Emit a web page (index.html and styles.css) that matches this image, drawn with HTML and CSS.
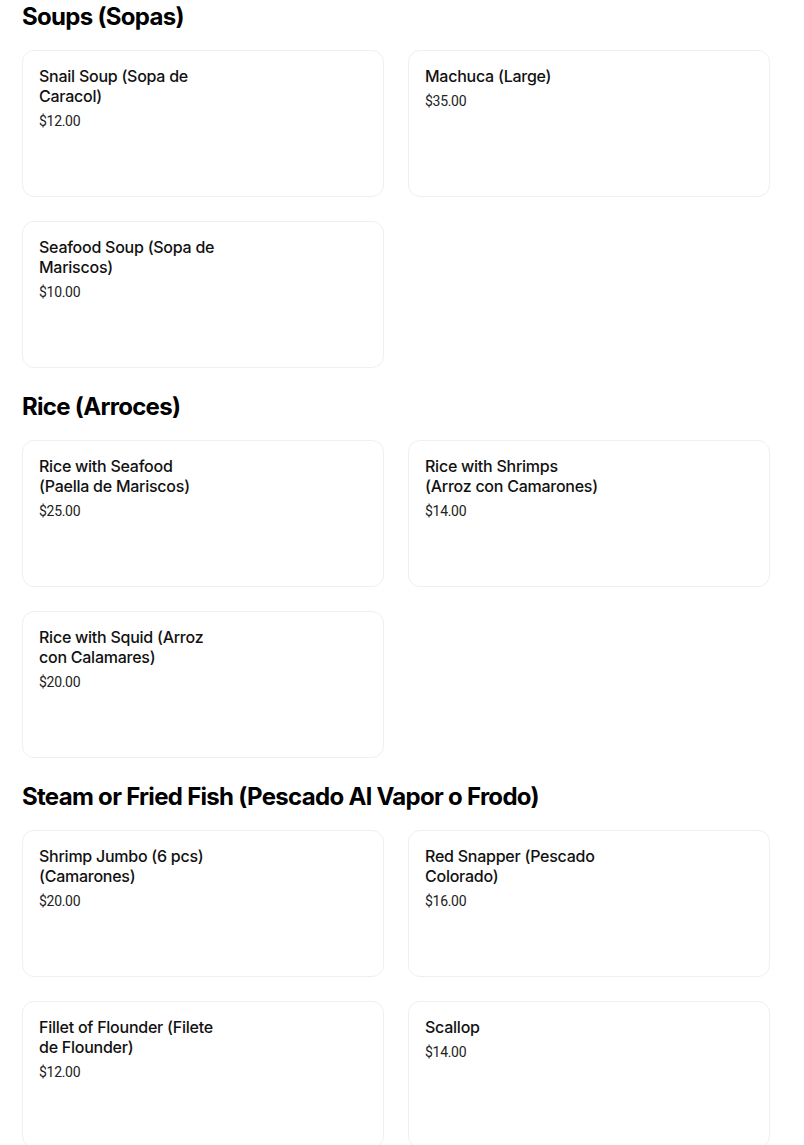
FILE: index.html
```html
<!DOCTYPE html>
<html lang="en">
<head>
<meta charset="utf-8">
<title>Menu</title>
<link rel="stylesheet" href="styles.css">
</head>
<body>
<main class="menu">
  <section class="section">
    <h2 class="section-title">Soups (Sopas)</h2>
    <div class="grid">
      <div class="card"><div class="card-text"><div class="item-name">Snail Soup (Sopa de Caracol)</div><div class="item-price">$12.00</div></div></div>
      <div class="card"><div class="card-text"><div class="item-name">Machuca (Large)</div><div class="item-price">$35.00</div></div></div>
      <div class="card"><div class="card-text"><div class="item-name">Seafood Soup (Sopa de Mariscos)</div><div class="item-price">$10.00</div></div></div>
    </div>
  </section>
  <section class="section">
    <h2 class="section-title">Rice (Arroces)</h2>
    <div class="grid">
      <div class="card"><div class="card-text"><div class="item-name">Rice with Seafood (Paella de Mariscos)</div><div class="item-price">$25.00</div></div></div>
      <div class="card"><div class="card-text"><div class="item-name">Rice with Shrimps (Arroz con Camarones)</div><div class="item-price">$14.00</div></div></div>
      <div class="card"><div class="card-text"><div class="item-name">Rice with Squid (Arroz con Calamares)</div><div class="item-price">$20.00</div></div></div>
    </div>
  </section>
  <section class="section">
    <h2 class="section-title">Steam or Fried Fish (Pescado Al Vapor o Frodo)</h2>
    <div class="grid">
      <div class="card"><div class="card-text"><div class="item-name">Shrimp Jumbo (6 pcs) (Camarones)</div><div class="item-price">$20.00</div></div></div>
      <div class="card"><div class="card-text"><div class="item-name">Red Snapper (Pescado Colorado)</div><div class="item-price">$16.00</div></div></div>
      <div class="card"><div class="card-text"><div class="item-name">Fillet of Flounder (Filete de Flounder)</div><div class="item-price">$12.00</div></div></div>
      <div class="card"><div class="card-text"><div class="item-name">Scallop</div><div class="item-price">$14.00</div></div></div>
    </div>
  </section>
</main>
</body>
</html>
```

FILE: styles.css
```css
* { box-sizing: border-box; }
html, body { margin: 0; padding: 0; background: #fff; }
body { font-family: Roboto, "Liberation Sans", sans-serif; color: #000; }
.menu { padding: 1px 34px 0 22px; }
.section { margin-bottom: 23px; }
.section-title {
  margin: 0 0 17px 0;
  font-family: Inter, "Liberation Sans", sans-serif;
  font-size: 24px;
  line-height: 32px;
  font-weight: 700;
  letter-spacing: -0.7px;
  color: #000;
}
.grid {
  display: grid;
  grid-template-columns: 362px 362px;
  column-gap: 24px;
  row-gap: 24px;
}
.card {
  height: 147px;
  border: 1px solid #efefef;
  border-radius: 12px;
  padding: 15px 16px 16px;
}
.card-text { width: 178px; }
.item-name {
  font-family: Inter, "Liberation Sans", sans-serif;
  font-size: 16px;
  line-height: 20px;
  font-weight: 500;
  letter-spacing: -0.25px;
  color: #111;
}
.item-price {
  margin-top: 5px;
  font-size: 14px;
  line-height: 20px;
  font-weight: 400;
  color: #222;
  letter-spacing: -0.3px;
}
```
